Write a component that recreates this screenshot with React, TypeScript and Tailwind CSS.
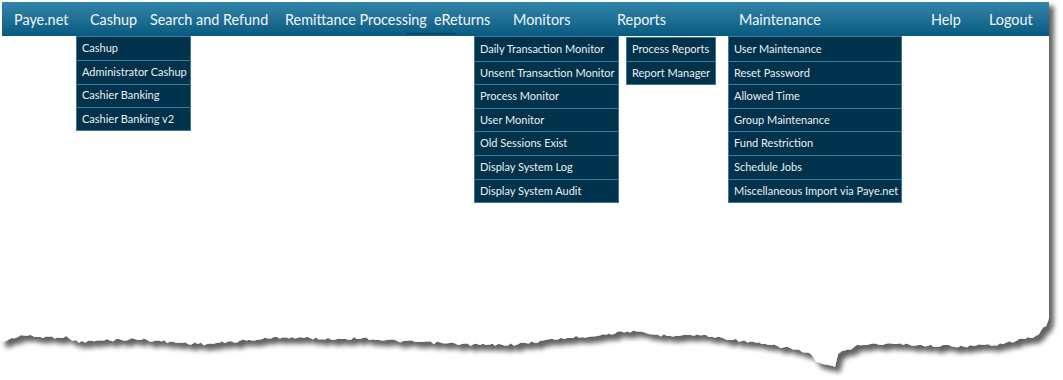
import React from "react";

const base: [number, number][] = [
  [0, 341], [5, 341], [21, 335], [40, 337], [66, 337], [79, 342], [110, 340], [138, 339], [170, 342], [207, 344],
  [240, 341], [283, 337], [331, 339], [360, 338], [397, 341], [440, 343], [483, 345], [520, 344],
  [555, 339], [600, 335], [627, 331], [658, 335], [700, 335], [730, 339], [762, 344], [790, 348], [811, 354],
  [816, 362], [822, 365], [835, 366], [838, 355], [845, 350], [863, 344], [900, 344], [940, 346], [970, 346],
  [1000, 344], [1025, 339], [1036, 336], [1041, 331], [1046, 325], [1049, 318],
];

function rnd(i: number) {
  const s = Math.sin(i * 12.9898 + 78.233) * 43758.5453;
  return s - Math.floor(s);
}

function buildPath() {
  const pts: string[] = [];
  let k = 0;
  for (let s = 0; s < base.length - 1; s++) {
    const [x0, y0] = base[s];
    const [x1, y1] = base[s + 1];
    const steps = Math.max(1, Math.round((x1 - x0) / 3));
    for (let j = 0; j < steps; j++) {
      const t = j / steps;
      const x = x0 + (x1 - x0) * t;
      const y = y0 + (y1 - y0) * t + (rnd(k++) - 0.5) * 2.8;
      pts.push(`${x.toFixed(1)},${y.toFixed(1)}`);
    }
  }
  pts.push(`1049,318`);
  return `M0,0 L1049,0 L1049,318 L${pts.reverse().join(" L")} Z`;
}

const paperPath = buildPath();

type Menu = { items: string[]; pos: string; w: string; itemH: string };

const navItems: { label: string; w: string; menu?: Menu; underline?: boolean }[] = [
  { label: "Paye.net", w: "w-[76px]" },
  {
    label: "Cashup",
    w: "w-[60px]",
    menu: {
      pos: "left-[-14px]",
      w: "w-[115px]",
      itemH: "h-[23.3px]",
      items: ["Cashup", "Administrator Cashup", "Cashier Banking", "Cashier Banking v2"],
    },
  },
  { label: "Search and Refund", w: "w-[135px]" },
  { label: "Remittance Processing", w: "w-[149px]" },
  { label: "eReturns", w: "w-[79px]", underline: true },
  {
    label: "Monitors",
    w: "w-[104px]",
    menu: {
      pos: "left-[-39px]",
      w: "w-[145px]",
      itemH: "h-[23.6px]",
      items: [
        "Daily Transaction Monitor",
        "Unsent Transaction Monitor",
        "Process Monitor",
        "User Monitor",
        "Old Sessions Exist",
        "Display System Log",
        "Display System Audit",
      ],
    },
  },
  {
    label: "Reports",
    w: "w-[122px]",
    menu: {
      pos: "left-[9px] mt-[1px]",
      w: "w-[90px]",
      itemH: "h-[23px]",
      items: ["Process Reports", "Report Manager"],
    },
  },
  {
    label: "Maintenance",
    w: "w-[192px]",
    menu: {
      pos: "left-[-11px]",
      w: "w-[174px]",
      itemH: "h-[23.6px]",
      items: [
        "User Maintenance",
        "Reset Password",
        "Allowed Time",
        "Group Maintenance",
        "Fund Restriction",
        "Schedule Jobs",
        "Miscellaneous Import via Paye.net",
      ],
    },
  },
  { label: "Help", w: "w-[58px]" },
  { label: "Logout", w: "w-[60px]" },
];

function Dropdown({ menu }: { menu: Menu }) {
  return (
    <div className={`absolute top-full z-10 bg-[#01324b] border border-[#3c7b9b] ${menu.pos} ${menu.w}`}>
      {menu.items.map((it, i) => (
        <div
          key={it}
          className={`${menu.itemH} flex items-center pl-[5px] pr-[4px] text-[11px] text-[#eaf0f3] whitespace-nowrap ${
            i > 0 ? "border-t border-[#3c7b9b]" : ""
          }`}
        >
          {it}
        </div>
      ))}
    </div>
  );
}

export default function App() {
  return (
    <div
      className="relative w-[1063px] h-[380px] bg-white overflow-hidden"
      style={{ fontFamily: "Lato, 'Open Sans', sans-serif" }}
    >
      <svg className="absolute inset-0" width="1063" height="380" viewBox="0 0 1063 380">
        <defs>
          <filter id="sh" x="-5%" y="-5%" width="115%" height="120%">
            <feGaussianBlur in="SourceAlpha" stdDeviation="2.4" />
            <feOffset dx="5" dy="6" result="b" />
            <feComponentTransfer>
              <feFuncA type="linear" slope="0.62" />
            </feComponentTransfer>
            <feMerge>
              <feMergeNode />
              <feMergeNode in="SourceGraphic" />
            </feMerge>
          </filter>
        </defs>
        <path d={paperPath} fill="#ffffff" filter="url(#sh)" />
      </svg>

      <div className="relative pt-[2px] pl-[2px]">
        <nav className="w-[1047px] h-[34px] bg-gradient-to-b from-[#3186aa] to-[#085a80] flex items-stretch pl-[12px] text-[14.4px] text-[#f2f6f8]">
          {navItems.map((n) => (
            <div key={n.label} className={`${n.w} relative shrink-0 flex items-center pt-[3px] whitespace-nowrap`}>
              <span className="leading-none">{n.label}</span>
              {n.underline && <div className="absolute left-[-28px] bottom-[2px] w-[50px] h-[1px] bg-[#0a3c56]" />}
              {n.menu && <Dropdown menu={n.menu} />}
            </div>
          ))}
        </nav>
      </div>
    </div>
  );
}
